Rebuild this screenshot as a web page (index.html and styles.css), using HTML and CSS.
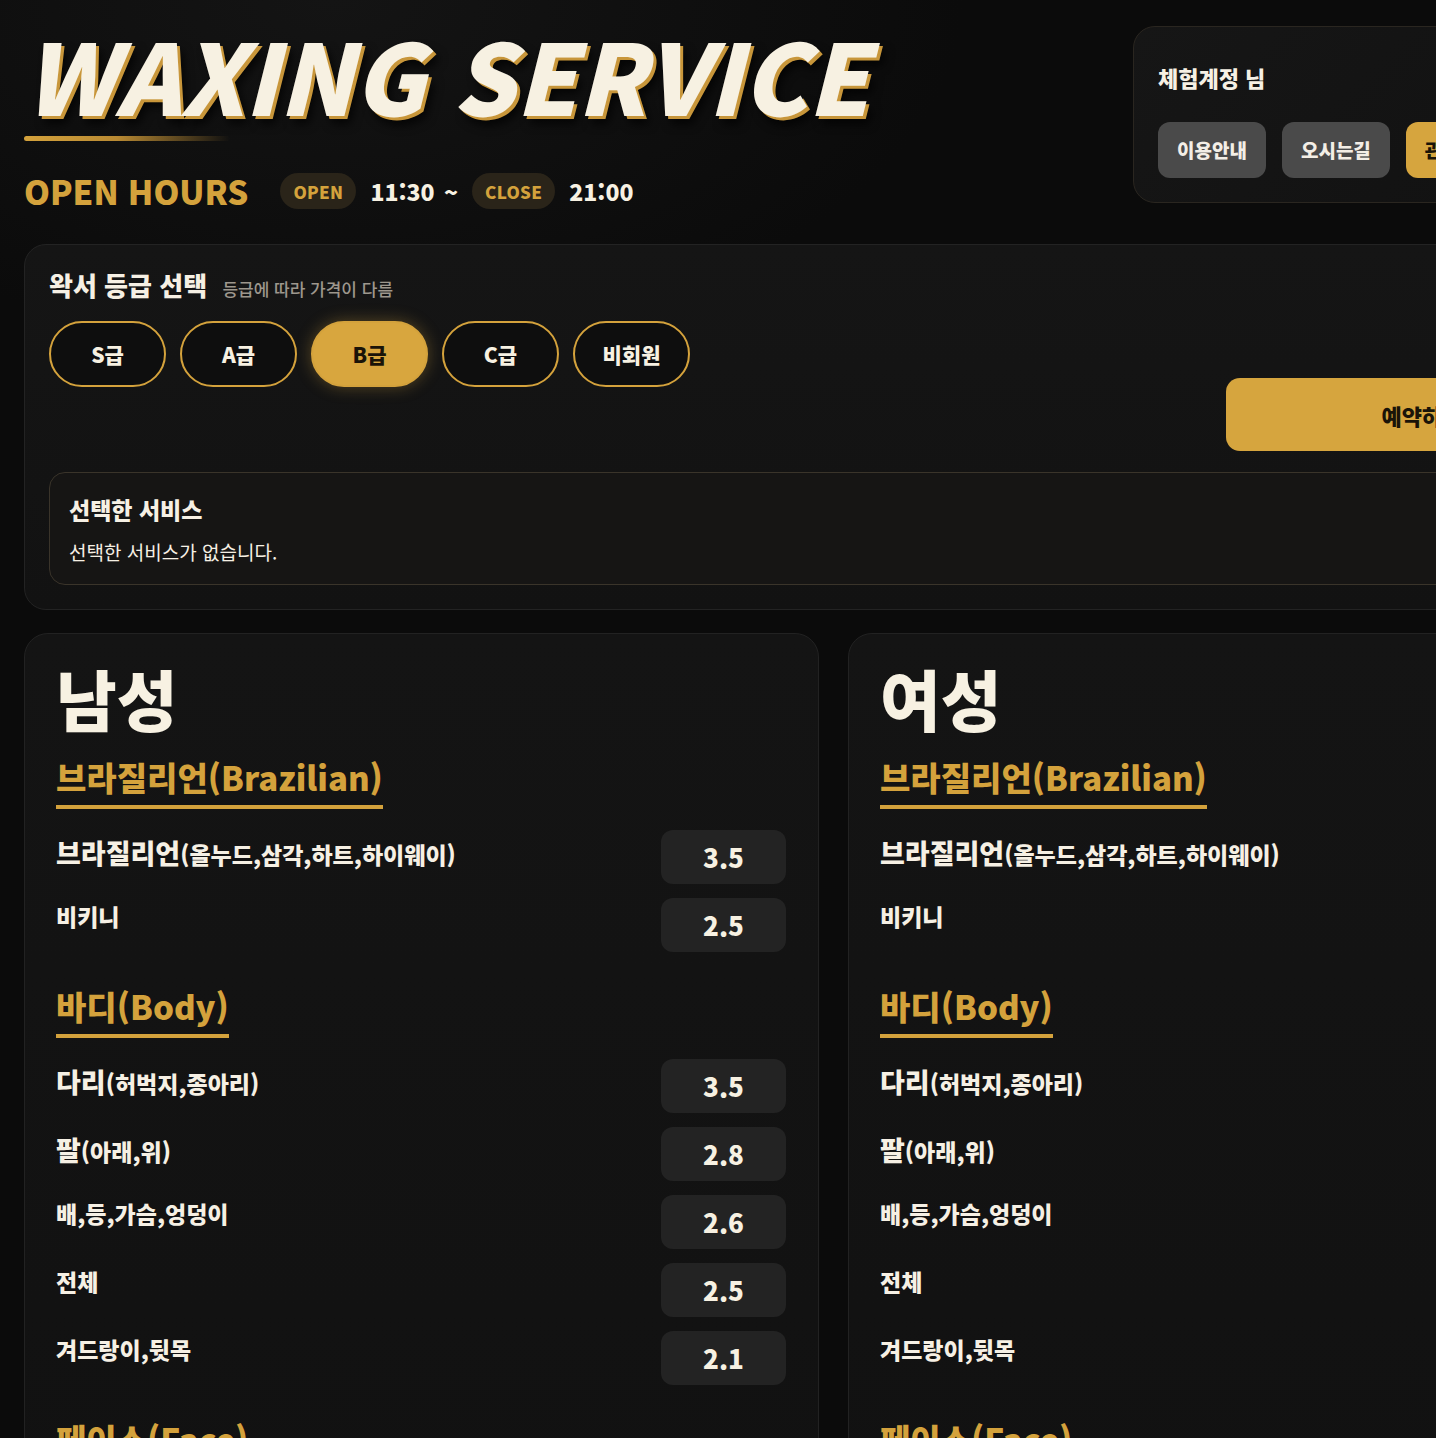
FILE: index.html
```html
<!DOCTYPE html>
<html lang="ko">
<head>
<meta charset="utf-8">
<title>WAXING SERVICE</title>
<link rel="stylesheet" href="styles.css">
</head>
<body>
<div class="page">
  <header class="top">
    <div class="brand">
      <h1 class="brand-title">WAXING SERVICE</h1>
      <div class="brand-bar"></div>
      <div class="hours">
        <span class="hours-label">OPEN HOURS</span>
        <span class="pill">OPEN</span>
        <span class="time">11:30 ~</span>
        <span class="pill">CLOSE</span>
        <span class="time">21:00</span>
      </div>
    </div>
    <aside class="account">
      <div class="account-name">체험계정 님</div>
      <nav class="account-links">
        <a class="btn btn-dark" href="#">이용안내</a>
        <a class="btn btn-dark" href="#">오시는길</a>
        <a class="btn btn-gold" href="#">관리자</a>
        <a class="btn btn-dark" href="#">로그아웃</a>
      </nav>
    </aside>
  </header>

  <section class="panel grade">
    <div class="grade-top">
      <div class="grade-pick">
        <h2 class="panel-title">왁서 등급 선택 <small>등급에 따라 가격이 다름</small></h2>
        <div class="grade-list">
          <button class="grade-btn">S급</button>
          <button class="grade-btn">A급</button>
          <button class="grade-btn is-active">B급</button>
          <button class="grade-btn">C급</button>
          <button class="grade-btn">비회원</button>
        </div>
      </div>
      <button class="reserve">예약하기</button>
    </div>
    <div class="selected">
      <h3 class="selected-title">선택한 서비스</h3>
      <p class="selected-empty">선택한 서비스가 없습니다.</p>
    </div>
  </section>

  <main class="menus">
    <article class="menu-card">
      <h2 class="menu-title">남성</h2>

      <h3 class="menu-section">브라질리언(Brazilian)</h3>
      <ul class="menu-list">
        <li class="menu-row"><span class="menu-name big">브라질리언<small>(올누드,삼각,하트,하이웨이)</small></span><span class="price">3.5</span></li>
        <li class="menu-row"><span class="menu-name">비키니</span><span class="price">2.5</span></li>
      </ul>

      <h3 class="menu-section">바디(Body)</h3>
      <ul class="menu-list">
        <li class="menu-row"><span class="menu-name big">다리<small>(허벅지,종아리)</small></span><span class="price">3.5</span></li>
        <li class="menu-row"><span class="menu-name big">팔<small>(아래,위)</small></span><span class="price">2.8</span></li>
        <li class="menu-row"><span class="menu-name">배,등,가슴,엉덩이</span><span class="price">2.6</span></li>
        <li class="menu-row"><span class="menu-name">전체</span><span class="price">2.5</span></li>
        <li class="menu-row"><span class="menu-name">겨드랑이,뒷목</span><span class="price">2.1</span></li>
      </ul>

      <h3 class="menu-section">페이스(Face)</h3>
      <ul class="menu-list">
        <li class="menu-row"><span class="menu-name">얼굴 전체</span><span class="price">2.0</span></li>
        <li class="menu-row"><span class="menu-name">인중</span><span class="price">1.0</span></li>
      </ul>
    </article>

    <article class="menu-card">
      <h2 class="menu-title">여성</h2>

      <h3 class="menu-section">브라질리언(Brazilian)</h3>
      <ul class="menu-list">
        <li class="menu-row"><span class="menu-name big">브라질리언<small>(올누드,삼각,하트,하이웨이)</small></span><span class="price">3.0</span></li>
        <li class="menu-row"><span class="menu-name">비키니</span><span class="price">2.0</span></li>
      </ul>

      <h3 class="menu-section">바디(Body)</h3>
      <ul class="menu-list">
        <li class="menu-row"><span class="menu-name big">다리<small>(허벅지,종아리)</small></span><span class="price">3.0</span></li>
        <li class="menu-row"><span class="menu-name big">팔<small>(아래,위)</small></span><span class="price">2.5</span></li>
        <li class="menu-row"><span class="menu-name">배,등,가슴,엉덩이</span><span class="price">2.3</span></li>
        <li class="menu-row"><span class="menu-name">전체</span><span class="price">2.2</span></li>
        <li class="menu-row"><span class="menu-name">겨드랑이,뒷목</span><span class="price">1.8</span></li>
      </ul>

      <h3 class="menu-section">페이스(Face)</h3>
      <ul class="menu-list">
        <li class="menu-row"><span class="menu-name">얼굴 전체</span><span class="price">1.8</span></li>
        <li class="menu-row"><span class="menu-name">인중</span><span class="price">0.8</span></li>
      </ul>
    </article>
  </main>
</div>
</body>
</html>
```

FILE: styles.css
```css
* { box-sizing: border-box; }

html, body {
  margin: 0;
  padding: 0;
  overflow-x: hidden;
}

body {
  background: #0b0b0b;
  color: #f6f0e4;
  font-family: "Noto Sans CJK KR", "Noto Sans", sans-serif;
}

.page {
  width: 1667px;
  padding: 24px;
  background:
    radial-gradient(ellipse 900px 500px at 20% 0%, #141414 0%, rgba(20,20,20,0) 70%),
    #0b0b0b;
}

/* ---------- header ---------- */
.top {
  display: flex;
  justify-content: space-between;
  align-items: flex-start;
}

.brand-title {
  margin: 0;
  font-size: 98px;
  line-height: 1;
  font-weight: 900;
  font-style: italic;
  color: #f7f1e2;
  text-shadow: 3px 3px 0 #c8963a, 6px 8px 10px rgba(0,0,0,0.7);
}

.brand-bar {
  width: 206px;
  height: 5px;
  margin-top: 14px;
  border-radius: 3px;
  background: linear-gradient(90deg, #d4a23c 0%, #b98a33 45%, rgba(185,138,51,0) 100%);
}

.hours {
  display: flex;
  align-items: center;
  gap: 14px;
  margin-top: 32px;
}

.hours-label {
  margin-right: 18px;
  font-size: 33px;
  font-weight: 800;
  letter-spacing: 0;
  color: #d4a23c;
  line-height: 1;
}

.pill {
  display: inline-flex;
  align-items: center;
  height: 36px;
  padding: 0 13px;
  border-radius: 18px;
  background: #2a2419;
  color: #d4a23c;
  font-size: 17px;
  font-weight: 800;
  letter-spacing: 0.3px;
}

.time {
  font-size: 23px;
  font-weight: 800;
  color: #f7f1e2;
  word-spacing: 3px;
}

.account {
  width: 510px;
  margin-top: 2px;
  padding: 36px 24px 24px;
  border: 1px solid #2a2620;
  border-radius: 22px;
  background: linear-gradient(135deg, #161616 0%, #111111 100%);
}

.account-name {
  font-size: 22px;
  font-weight: 800;
  line-height: 1.3;
}

.account-links {
  display: flex;
  gap: 16px;
  margin-top: 30px;
}

.btn {
  display: inline-flex;
  align-items: center;
  justify-content: center;
  height: 56px;
  padding: 0 19px;
  border-radius: 12px;
  font-size: 19px;
  font-weight: 800;
  text-decoration: none;
  white-space: nowrap;
}

.btn-dark { background: #4a4a4a; color: #f3eee6; }
.btn-gold { background: #d6a53e; color: #1a1408; }

/* ---------- grade panel ---------- */
.panel {
  margin-top: 35px;
  padding: 22px 24px 24px;
  border: 1px solid #232323;
  border-radius: 22px;
  background: linear-gradient(180deg, #151515 0%, #121212 100%);
}

.grade-top {
  display: flex;
  justify-content: space-between;
  align-items: flex-start;
}

.panel-title {
  margin: 0;
  font-size: 26px;
  line-height: 1.4;
  font-weight: 800;
}

.panel-title small {
  margin-left: 8px;
  font-size: 17px;
  font-weight: 500;
  color: #9d978d;
}

.grade-list {
  display: flex;
  gap: 14px;
  margin-top: 18px;
}

.grade-btn {
  width: 117px;
  height: 66px;
  border: 2px solid #d4a23c;
  border-radius: 33px;
  background: #0e0e0e;
  color: #f7f1e2;
  font-family: inherit;
  font-size: 21px;
  font-weight: 800;
  cursor: pointer;
}

.grade-btn.is-active {
  background: #d8a63e;
  color: #1a1408;
  box-shadow: 0 0 16px rgba(216,166,62,0.35);
}

.reserve {
  width: 392px;
  height: 73px;
  margin-top: 111px;
  border: 0;
  border-radius: 14px;
  background: #d6a53e;
  color: #1a1408;
  font-family: inherit;
  font-size: 22px;
  font-weight: 800;
  cursor: pointer;
}

.selected {
  margin-top: 21px;
  padding: 20px 19px 17px;
  border: 1px solid #3a342a;
  border-radius: 16px;
  background: #161514;
}

.selected-title {
  margin: 0;
  font-size: 23px;
  line-height: 1.4;
  font-weight: 800;
}

.selected-empty {
  margin: 13px 0 0;
  font-size: 19px;
  line-height: 1.5;
  font-weight: 400;
}

/* ---------- menu cards ---------- */
.menus {
  display: grid;
  grid-template-columns: 1fr 1fr;
  gap: 29px;
  margin-top: 23px;
}

.menu-card {
  padding: 24px 32px 32px 31px;
  border: 1px solid #222;
  border-radius: 24px;
  background: linear-gradient(180deg, #141414 0%, #111111 100%);
}

.menu-title {
  margin: 0;
  font-size: 66px;
  line-height: 1.2;
  font-weight: 900;
  color: #f7f1e2;
}

.menu-section {
  display: inline-block;
  margin: 19px 0 0;
  padding-bottom: 6px;
  border-bottom: 4px solid #d4a23c;
  font-size: 33px;
  line-height: 1.3;
  font-weight: 800;
  color: #d4a23c;
}

.menu-list + .menu-section { margin-top: 33px; }

.menu-list {
  list-style: none;
  margin: 21px 0 0;
  padding: 0;
  display: flex;
  flex-direction: column;
  gap: 14px;
}

.menu-row {
  display: flex;
  justify-content: space-between;
  align-items: flex-start;
}

.menu-name {
  padding-top: 1px;
  font-size: 23px;
  line-height: 1.5;
  font-weight: 800;
}

.menu-name.big {
  padding-top: 3px;
  font-size: 27px;
}

.menu-name small {
  font-size: 23px;
  font-weight: 800;
}

.price {
  display: flex;
  align-items: center;
  justify-content: center;
  width: 125px;
  height: 54px;
  border-radius: 12px;
  background: #232323;
  font-size: 26px;
  font-weight: 800;
  color: #f7f1e2;
}
```
